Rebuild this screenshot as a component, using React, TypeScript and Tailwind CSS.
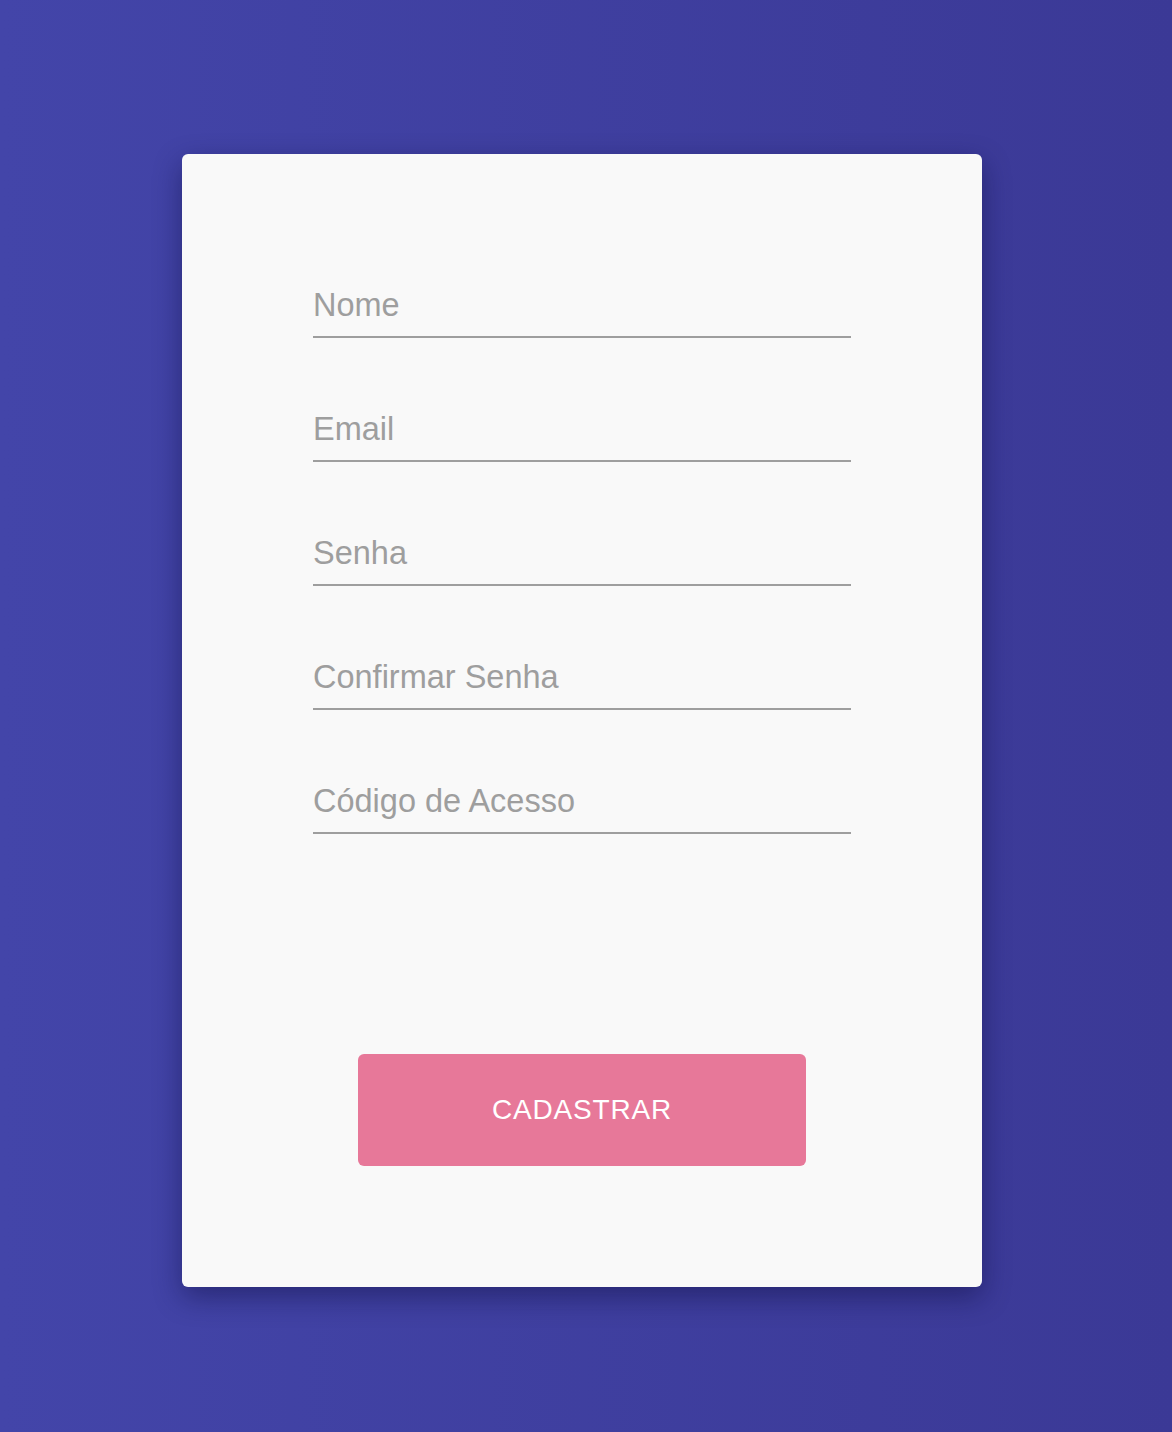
import React from "react";

const fields = ["Nome", "Email", "Senha", "Confirmar Senha", "Código de Acesso"];

export default function App() {
  return (
    <div
      className="w-full h-[1432px] bg-gradient-to-r from-[#4345a9] to-[#3b3996] pt-[154px] flex justify-center pr-[8px]"
      style={{ fontFamily: '"Liberation Sans", Arial, sans-serif' }}
    >
      <div className="w-[800px] h-[1133px] bg-[#f9f9f9] rounded-[6px] shadow-[0_10px_28px_rgba(10,10,60,0.45)] pt-[122px] flex flex-col items-center">
        <div className="w-[538px] flex flex-col gap-[62px]">
          {fields.map((f) => (
            <input
              key={f}
              type="text"
              placeholder={f}
              className="w-full h-[62px] pb-[2px] bg-transparent border-b-2 border-[#9e9e9e] text-[32.5px] text-[#555] placeholder:text-[#9e9e9e] outline-none px-0"
            />
          ))}
        </div>
        <button className="mt-[220px] w-[448px] h-[112px] rounded-[6px] bg-[#e77899] text-white text-[28px] tracking-[0.8px]">
          CADASTRAR
        </button>
      </div>
    </div>
  );
}
